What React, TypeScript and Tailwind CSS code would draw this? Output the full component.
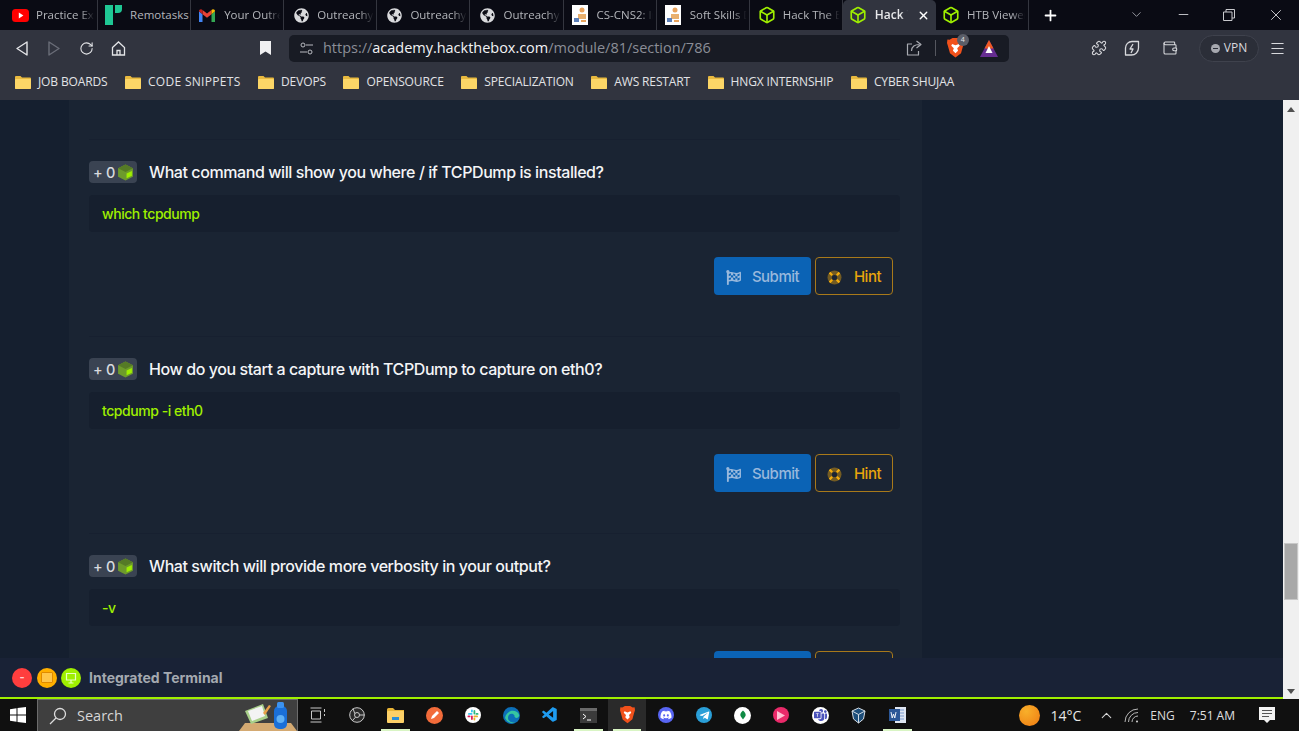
import React from "react";
import { Box, RotateCw, Puzzle, Wallet, ChevronDown, ChevronUp, Minus, X, Plus, Menu } from "lucide-react";
import { FaFlagCheckered, FaGlobeAmericas, FaDiscord, FaTelegramPlane } from "react-icons/fa";
import { VscVscode } from "react-icons/vsc";
import { BsMicrosoftTeams } from "react-icons/bs";

const Yt = () => (
  <svg width="17" height="13" viewBox="0 0 17 13"><rect width="17" height="13" rx="3.5" fill="#f00" /><path d="M6.8 3.6l4.6 2.9-4.6 2.9z" fill="#fff" /></svg>
);
const Remo = () => (
  <svg width="17" height="20" viewBox="0 0 17 20"><rect x="0" y="0" width="8" height="20" fill="#1fc794" /><path d="M10 0h7v4a4 4 0 0 1-4 4h-3z" fill="#1fc794" /></svg>
);
const Gmail = () => (
  <svg width="16" height="13" viewBox="0 0 16 13">
    <path d="M0 2.2V13h3.5V5.2z" fill="#4285f4" /><path d="M12.5 5.2V13H16V2.2z" fill="#34a853" />
    <path d="M3.5 1L8 4.6 12.5 1v4.2L8 8.8 3.5 5.2z" fill="#ea4335" /><path d="M0 2.2C0 .4 2.2-.4 3.5 1v4.2z" fill="#c5221f" /><path d="M16 2.2C16 .4 13.8-.4 12.5 1v4.2z" fill="#fbbc04" />
  </svg>
);
const Globe = () => <FaGlobeAmericas size={15} color="#d9dadd" />;
const Doodle = () => (
  <svg width="16" height="20" viewBox="0 0 16 20">
    <rect width="16" height="20" fill="#fff" /><circle cx="10" cy="5" r="2.5" fill="#e9a35c" /><path d="M6 9h8v5H6z" fill="#e9b06e" /><path d="M2 13h5v4H2z" fill="#5c7fb8" /><path d="M9 15h5v2H9z" fill="#e9a35c" />
  </svg>
);
const Htb = () => <Box size={18} color="#9fef00" strokeWidth={2.2} />;

const fade = "[mask-image:linear-gradient(to_right,black_72%,transparent_96%)]";

const tabs = [
  { icon: <Yt />, t: "Practice Ex", gap: "gap-[7px]", pl: "pl-[6px]", mask: fade },
  { icon: <Remo />, t: "Remotasks", gap: "gap-[8px]", pl: "pl-[6px]", mask: "" },
  { icon: <Gmail />, t: "Your Outreach", gap: "gap-[8px]", pl: "pl-[7px]", mask: fade },
  { icon: <Globe />, t: "Outreachy", gap: "gap-[7px]", pl: "pl-[8px]", mask: fade },
  { icon: <Globe />, t: "Outreachy", gap: "gap-[7px]", pl: "pl-[8px]", mask: fade },
  { icon: <Globe />, t: "Outreachy", gap: "gap-[7px]", pl: "pl-[8px]", mask: fade },
  { icon: <Doodle />, t: "CS-CNS2: Intro", gap: "gap-[8px]", pl: "pl-[7px]", mask: fade },
  { icon: <Doodle />, t: "Soft Skills Dev", gap: "gap-[8px]", pl: "pl-[7px]", mask: fade },
  { icon: <Htb />, t: "Hack The Box", gap: "gap-[7px]", pl: "pl-[8px]", mask: fade },
];

const Tab = ({ icon, t, gap, pl, mask }: { icon: React.ReactNode; t: string; gap: string; pl: string; mask: string }) => (
  <div className={`flex h-[30px] w-[93.1px] shrink-0 items-center border-r border-[#34363f] ${gap} ${pl}`}>
    <span className="flex w-[18px] shrink-0 justify-center">{icon}</span>
    <span className={`min-w-0 flex-1 overflow-hidden whitespace-nowrap text-[11.5px] text-[#b4b6bb] ${mask}`}>{t}</span>
  </div>
);

const Folder = () => (
  <svg width="16" height="14" viewBox="0 0 16 14">
    <path d="M0 2a1 1 0 0 1 1-1h4.5l1.5 1.5h8a1 1 0 0 1 1 1V13a1 1 0 0 1-1 1H1a1 1 0 0 1-1-1z" fill="#e8b93f" />
    <rect x="0" y="4" width="16" height="10" rx="1" fill="#fcd667" />
  </svg>
);

const marks = [
  { t: "JOB BOARDS", c: "tracking-[-0.13px]" },
  { t: "CODE SNIPPETS", c: "tracking-[0.3px]" },
  { t: "DEVOPS", c: "tracking-[-0.13px]" },
  { t: "OPENSOURCE", c: "tracking-[-0.13px]" },
  { t: "SPECIALIZATION", c: "tracking-[-0.13px]" },
  { t: "AWS RESTART", c: "tracking-[-0.13px]" },
  { t: "HNGX INTERNSHIP", c: "tracking-[-0.13px]" },
  { t: "CYBER SHUJAA", c: "tracking-[-0.13px]" },
];

const Brave = ({ size = 17 }: { size?: number }) => (
  <svg width={size} height={size * 1.15} viewBox="0 0 20 23">
    <path d="M3 2L6.5 0h7L17 2l2.500-.2.5 4-1 3-2.500 9L10 23l-6.500-5L1 9 0 5.800.5 1.800z" fill="#f1511b" />
    <path d="M6 7l4 1.500L14 7l1 2-3 3 1 3-3 3-3-3 1-3-3-3z" fill="#fff" />
  </svg>
);
const Bat = () => (
  <svg width="18" height="17" viewBox="0 0 18 17">
    <path d="M9 0l9 17H0z" fill="#662d91" /><path d="M9 0l4.5 8.5h-9z" fill="#f15a22" /><path d="M9 6l3.500 7h-7z" fill="#fff" />
  </svg>
);

const Cube = () => (
  <svg width="17" height="17" viewBox="0 0 16 16">
    <path d="M8 .5l7 3.500v8L8 15.500 1 12V4z" fill="#6d9a2c" />
    <path d="M8 .5l7 3.500-7 3.500L1 4z" fill="#557a26" />
    <path d="M9 9l5-2.500v4.500L9 13.500z" fill="#9fef00" />
  </svg>
);

const Ring = () => (
  <svg width="15" height="15" viewBox="0 0 15 15">
    <circle cx="7.5" cy="7.5" r="7" fill="#e0a010" fillOpacity="0.45" />
    <circle cx="7.5" cy="7.5" r="2.6" fill="#1a2433" />
    <path d="M1.800 3.400L3.400 1.800 6 4.400 4.400 6zM13.200 3.400L11.600 1.800 9 4.400 10.600 6zM1.800 11.600L3.400 13.200 6 10.600 4.400 9zM13.200 11.600L11.600 13.200 9 10.600 10.600 9z" fill="#f5ad0c" />
  </svg>
);

const Question = ({ q, a }: { q: string; a: string }) => (
  <section className="h-[197px] shrink-0 border-t border-[#172030] pt-[21px]">
    <div className="flex h-[22px] items-center">
      <div className="flex h-[22px] w-[48px] items-center justify-center gap-[2px] rounded-[4px] bg-[#3a4352] pl-px text-[14.5px] font-medium tracking-[-0.3px] text-[#d8dade]">
        <span className="pt-px">+ 0</span>
        <Cube />
      </div>
      <h3 className="ml-3 -mt-px whitespace-nowrap text-[16px] font-medium tracking-[-0.42px] text-[#f4f5f7]">{q}</h3>
    </div>
    <div className="mt-3 flex h-[37px] w-[811px] items-center rounded-[4px] bg-[#161f2e] px-[13px] text-[14px] font-medium tracking-[-0.45px] text-[#9fef00]">{a}</div>
    <div className="mt-[25px] flex justify-end gap-1 pr-[7px]">
      <button className="flex h-[38px] w-[97px] items-center justify-center gap-[11px] rounded-[4px] bg-[#0b63b5] pt-[2px] text-[15px] font-medium tracking-[-0.5px] text-[#98b8dc]">
        <FaFlagCheckered size={15} />
        Submit
      </button>
      <button className="flex h-[38px] w-[78px] items-center justify-center gap-[12px] rounded-[4px] border border-[#a8791a] pt-[2px] text-[15px] font-medium tracking-[-0.5px] text-[#e8a50c]">
        <Ring />
        Hint
      </button>
    </div>
  </section>
);

const IconSlot = ({ children, on }: { children: React.ReactNode; on?: boolean }) => (
  <div className={`relative flex h-[32px] w-[38.6px] shrink-0 items-center justify-center ${on ? "bg-[#2a2a2a]" : ""}`}>
    {children}
  </div>
);
const Ind = () => <span className="absolute bottom-0 left-[5px] right-[5px] h-[2px] bg-[#d9f5c4]" />;

export default function App() {
  return (
    <div className="flex h-[731px] w-[1299px] flex-col overflow-hidden bg-[#151f2f] [font-family:Inter,sans-serif]">
      {/* tab strip */}
      <div className="flex h-[30px] shrink-0 bg-[#0a0b14] pl-[5px] [font-family:'Open_Sans',sans-serif]">
        {tabs.map((t, i) => <Tab key={i} {...t} />)}
        <div className="flex h-[30px] w-[93.1px] shrink-0 items-center gap-[8px] rounded-t-[5px] bg-[#31343f] pl-[6px]">
          <span className="flex w-[18px] justify-center"><Htb /></span>
          <span className="w-[33px] overflow-hidden whitespace-nowrap text-[12px] font-semibold text-[#e8e9eb] [mask-image:linear-gradient(to_right,black_78%,transparent)]">Hack T</span>
          <X size={13} color="#fff" strokeWidth={2.5} className="ml-px" />
        </div>
        <Tab icon={<Htb />} t="HTB Viewer" gap="gap-[7px]" pl="pl-[6px]" mask={fade} />
        <Plus size={17} color="#fff" strokeWidth={2.5} className="ml-[13px] mt-[7px]" />
        <ChevronDown size={15} color="#9a9ca3" strokeWidth={1.5} className="ml-[70px] mt-[7px]" />
        <Minus size={15} color="#c8c9cd" strokeWidth={1.5} className="ml-[32px] mt-[7px]" />
        <svg width="12" height="12" viewBox="0 0 12 12" className="ml-[32px] mt-[9px]" fill="none" stroke="#c8c9cd"><path d="M.5 3h8.5v8.500H.5zM3 3V.5h8.500V9H9" /></svg>
        <X size={18} color="#c8c9cd" strokeWidth={1.3} className="ml-[32px] mt-[6px]" />
      </div>

      {/* toolbar */}
      <div className="flex h-[36px] shrink-0 items-center bg-[#31343f] [font-family:'Open_Sans',sans-serif]">
        <svg width="12" height="15" viewBox="0 0 12 15" className="ml-[16px]" fill="none" stroke="#e4e5e8" strokeWidth="1.4" strokeLinejoin="round"><path d="M11 1v13L1 7.5z" /></svg>
        <svg width="12" height="15" viewBox="0 0 12 15" className="ml-[20px]" fill="none" stroke="#6a6d78" strokeWidth="1.4" strokeLinejoin="round"><path d="M1 1v13l10-6.500z" /></svg>
        <RotateCw size={15} color="#e4e5e8" strokeWidth={1.7} className="ml-[19px]" />
        <svg width="15" height="15" viewBox="0 0 15 15" className="ml-[17px]" fill="none" stroke="#e4e5e8" strokeWidth="1.3"><path d="M1.500 6.500L7.500 1l6 5.500V14h-12zM6 14V9.500h3V14" /></svg>
        <svg width="11" height="14" viewBox="0 0 11 14" className="ml-[134px]"><path d="M0 0h11v14L5.500 10.500 0 14z" fill="#f0f0f2" /></svg>
        <div className="ml-[18px] flex h-[27px] w-[720px] items-center rounded-[5px] bg-[#181b24] pl-[11px]">
          <svg width="13" height="13" viewBox="0 0 13 13" fill="none" stroke="#b8bac0" strokeWidth="1"><circle cx="3" cy="3" r="2" /><path d="M6 3h7M0 10h7" /><circle cx="10" cy="10" r="2" /></svg>
          <span className="ml-[10px] whitespace-nowrap text-[14.5px] tracking-[-0.02px] text-[#8b8e97]">https://<span className="text-[#f2f3f5]">academy.hackthebox.com</span>/module/81/section/786</span>
          <svg width="17" height="16" viewBox="0 0 17 16" className="ml-[195px]" fill="none" stroke="#a9abb2" strokeWidth="1.2" strokeLinejoin="round"><path d="M6 4H1.500v11h11v-4" /><path d="M5.500 11c0-4.500 3.500-6.500 8-6.500M10.500 1l4.500 3.500L10.500 8" /></svg>
          <span className="ml-[12px] h-[16px] w-px bg-[#55575f]" />
          <div className="relative ml-[11px] flex">
            <Brave />
            <span className="absolute left-[10px] top-[-4px] flex h-[12px] w-[12px] items-center justify-center rounded-full bg-[#5b5e68] text-[7px] text-[#e6e6e8]">4</span>
          </div>
          <span className="ml-[16px] flex"><Bat /></span>
        </div>
        <Puzzle size={16} color="#d8d9dd" strokeWidth={1.6} className="ml-[82px]" />
        <svg width="16" height="17" viewBox="0 0 16 17" className="ml-[17px]" fill="none" stroke="#d8d9dd" strokeWidth="1.3" strokeLinejoin="round"><path d="M8 1.500h6.500V8a7 7 0 0 1-7 7H1.500V8a6.500 6.500 0 0 1 6.500-6.500z" /><path d="M9 4L6 9h3l-2 4" /></svg>
        <Wallet size={16} color="#d8d9dd" strokeWidth={1.6} className="ml-[22px]" />
        <div className="ml-[21px] flex h-[27px] w-[60px] items-center justify-center gap-[4px] rounded-full border border-[#3f424d] bg-[#2b2e38] text-[12px] text-[#d8d9dd]">
          <span className="flex h-[9px] w-[9px] items-center justify-center rounded-full bg-[#a6a8af]"><span className="h-px w-[5px] bg-[#2b2e38]" /></span>
          VPN
        </div>
        <Menu size={17} color="#d8d9dd" strokeWidth={1.5} className="ml-[10px]" />
      </div>

      {/* bookmarks */}
      <div className="flex h-[34px] shrink-0 items-center gap-[17.5px] bg-[#31343f] pb-[2px] pl-[15px] [font-family:'Open_Sans',sans-serif]">
        {marks.map((m) => (
          <div key={m.t} className={`flex items-center gap-[7px] whitespace-nowrap text-[12px] text-[#e2e3e6] ${m.c}`}>
            <Folder />
            {m.t}
          </div>
        ))}
      </div>

      {/* page */}
      <div className="flex h-[599px] shrink-0">
        <div className="relative min-w-0 flex-1 overflow-hidden">
          <div className="ml-[69px] flex h-[599px] w-[853px] flex-col overflow-hidden bg-[#1a2433] pl-5 pr-[22px] pt-[39px]">
            <Question q="What command will show you where / if TCPDump is installed?" a="which tcpdump" />
            <Question q="How do you start a capture with TCPDump to capture on eth0?" a="tcpdump -i eth0" />
            <Question q="What switch will provide more verbosity in your output?" a="-v" />
          </div>
          <div className="absolute bottom-0 left-0 right-0 flex h-[41px] items-center border-b-2 border-[#9fef00] bg-[#192236] pl-3">
            <span className="flex h-[20px] w-[20px] items-center justify-center rounded-full bg-[#ff3e3e] text-[11px] font-bold leading-none text-[#ffd0d0]">-</span>
            <span className="ml-[5px] flex h-[20px] w-[20px] items-center justify-center rounded-full bg-[#ffaf00]"><span className="h-[11px] w-[12px] rounded-[1px] border border-[#e08a00] bg-[#ffc64a]" /></span>
            <span className="ml-[4px] flex h-[20px] w-[20px] items-center justify-center rounded-full bg-[#9fef00]">
              <svg width="12" height="12" viewBox="0 0 12 12" fill="none" stroke="#e6ffc0" strokeWidth="1.2"><path d="M1.500 1.500h9v6.500h-9zM6 8v3M3.500 11h5" /></svg>
            </span>
            <span className="ml-[8px] text-[14px] font-bold text-[#a4a9b0]">Integrated Terminal</span>
          </div>
        </div>
        {/* scrollbar */}
        <div className="flex w-4 shrink-0 flex-col items-center bg-[#f0f0f0] pt-[7px] pb-[5px]">
          <span className="h-0 w-0 border-x-[4px] border-b-[5px] border-x-transparent border-b-[#505050]" />
          <span className="mt-[431px] h-[57px] w-[14px] shrink-0 border border-[#c8c8c8] bg-[#a8a8a8]" />
          <span className="mt-auto h-0 w-0 border-x-[4px] border-t-[5px] border-x-transparent border-t-[#505050]" />
        </div>
      </div>

      {/* taskbar */}
      <div className="flex h-[32px] shrink-0 items-center bg-[#101010] [font-family:'Open_Sans',sans-serif]">
        <svg width="16" height="16" viewBox="0 0 16 16" className="ml-[10px]" fill="#fff"><path d="M0 2.300L6.500 1.300V7.500H0zM7.500 1.100L16 0V7.500H7.500zM0 8.500H6.500V14.700L0 13.700zM7.500 8.500H16V16L7.500 14.900z" /></svg>
        <div className="relative ml-[11px] flex h-[32px] w-[261px] items-center overflow-hidden border-x border-t border-[#6c6c6c] bg-[#3f3f3f] pl-[11px]">
          <svg width="18" height="18" viewBox="0 0 18 18" fill="none" stroke="#dcdcdc" strokeWidth="1.3"><circle cx="11" cy="7" r="5.500" /><path d="M7 11l-6 6" /></svg>
          <span className="ml-[10px] pt-px text-[14.5px] text-[#d6d6d6]">Search</span>
          <svg width="62" height="30" viewBox="0 0 62 30" className="absolute bottom-0 right-0">
            <path d="M4 30l6-8h46l6 8z" fill="#d4aa72" />
            <path d="M10 10l18-7 5 14-17 6z" fill="#a9d08a" /><path d="M13 10l14-5 3 10-13 5z" fill="#f3f3f3" />
            <path d="M28 12l6-8 2 1-6 9z" fill="#e8a048" />
            <rect x="39" y="5" width="13" height="23" rx="5" fill="#1a6fd8" /><rect x="42" y="1" width="7" height="6" rx="1.5" fill="#3b92f0" /><circle cx="45.5" cy="18" r="4" fill="#5fb0f5" />
          </svg>
        </div>
        <div className="ml-[1px] flex items-center">
          <IconSlot>
            <svg width="16" height="16" viewBox="0 0 16 16" fill="none" stroke="#c9c9c9" strokeWidth="1"><path d="M.5 1h11M.5 15h11M1.500 4h9v8h-9zM14.500 2v3M14.500 7v2" /></svg>
          </IconSlot>
          <IconSlot>
            <svg width="16" height="16" viewBox="0 0 16 16" fill="none" stroke="#c9c9c9" strokeWidth="1"><circle cx="8" cy="8" r="7.3" fill="#2a2a2a" /><circle cx="8" cy="8" r="2.5" /><path d="M5.800 6.700L4 1.500M10.500 8h5M6.500 10.200L3 14" /></svg>
          </IconSlot>
          <IconSlot>
            <svg width="17" height="15" viewBox="0 0 17 15"><path d="M0 1.500A1.500 1.500 0 0 1 1.500 0H6l2 2h9v3H0z" fill="#e8b436" /><rect y="3" width="17" height="12" rx="1" fill="#fcd067" /><rect x="5" y="9" width="7" height="3" fill="#2a8fd8" /></svg>
            <Ind />
          </IconSlot>
          <IconSlot>
            <svg width="17" height="17" viewBox="0 0 17 17"><circle cx="8.5" cy="8.5" r="8.5" fill="#f26b3a" /><path d="M5 12l1-3 5-5 2 2-5 5z" fill="#fff" /></svg>
          </IconSlot>
          <IconSlot>
            <svg width="16" height="16" viewBox="0 0 16 16"><circle cx="8" cy="8" r="8" fill="#fff" /><rect x="3" y="6" width="4.5" height="1.8" rx=".9" fill="#36c5f0" /><rect x="6" y="2.5" width="1.8" height="3" rx=".9" fill="#36c5f0" /><rect x="8.5" y="3" width="1.8" height="4.5" rx=".9" fill="#2eb67d" /><rect x="10.5" y="6" width="3" height="1.8" rx=".9" fill="#2eb67d" /><rect x="8.5" y="8.5" width="4.5" height="1.8" rx=".9" fill="#ecb22e" /><rect x="8.5" y="10.5" width="1.8" height="3" rx=".9" fill="#ecb22e" /><rect x="6" y="8.5" width="1.8" height="4.5" rx=".9" fill="#e01e5a" /><rect x="2.5" y="8.5" width="3" height="1.8" rx=".9" fill="#e01e5a" /></svg>
          </IconSlot>
          <IconSlot>
            <svg width="17" height="17" viewBox="0 0 17 17"><circle cx="8.5" cy="8.5" r="8.5" fill="#0c6fb8" /><path d="M2 11C3 5 9 2 14 5c2 1.500 3 4 1 5.500-2 1-4 0-3.500-2C10 6 5 6 5 11c0 3 4 5.500 8 4.500A8.500 8.500 0 0 1 2 11z" fill="#37c6a0" /></svg>
          </IconSlot>
          <IconSlot><VscVscode size={18} color="#1f9cf0" /></IconSlot>
          <IconSlot>
            <svg width="17" height="15" viewBox="0 0 17 15"><rect width="17" height="15" fill="#3b3b3b" /><rect width="17" height="3" fill="#6a6a6a" /><path d="M3 6l3 2.500-3 2.500" fill="none" stroke="#fff" /><path d="M7 12h4" stroke="#fff" /></svg>
            <Ind />
          </IconSlot>
          <IconSlot on><Brave size={15} /><Ind /></IconSlot>
          <IconSlot>
            <span className="flex h-[16px] w-[16px] items-center justify-center rounded-full bg-[#5865f2]"><FaDiscord size={12} color="#fff" /></span>
          </IconSlot>
          <IconSlot>
            <span className="flex h-[16px] w-[16px] items-center justify-center rounded-full bg-[#2a9fd8]"><FaTelegramPlane size={11} color="#fff" /></span>
          </IconSlot>
          <IconSlot>
            <span className="flex h-[17px] w-[17px] items-center justify-center rounded-full bg-white">
              <svg width="6" height="12" viewBox="0 0 8 12"><path d="M4 0c2.500 2.500 4 4.500 3.500 6.500S5 9.500 4 12C3 9.500 1 8.500.5 6.500S1.500 2.500 4 0z" fill="#0f8a44" /></svg>
            </span>
          </IconSlot>
          <IconSlot>
            <span className="flex h-[16px] w-[16px] items-center justify-center rounded-full bg-[#ea2a6a]">
              <svg width="8" height="9" viewBox="0 0 8 9"><path d="M0 0l8 4.500L0 9z" fill="#ffc0d4" /></svg>
            </span>
          </IconSlot>
          <IconSlot>
            <span className="flex h-[17px] w-[17px] items-center justify-center rounded-full bg-white"><BsMicrosoftTeams size={13} color="#4b53bc" /></span>
          </IconSlot>
          <IconSlot>
            <svg width="15" height="17" viewBox="0 0 15 17" fill="#1d4e7a" stroke="#d4dce4" strokeWidth="1"><path d="M7.500 1l6.500 3-1.500 8-5 4-5-4L1 4z" /><path d="M1 4l6.500 3.500L14 4M7.500 7.500V16" fill="none" /></svg>
          </IconSlot>
          <IconSlot>
            <svg width="17" height="16" viewBox="0 0 17 16"><rect x="6" width="11" height="16" fill="#dfe6f2" /><path d="M9 3h6M9 6h6M9 9h6M9 12h6" stroke="#7a9bd0" /><rect y="2" width="11" height="12" fill="#2b5797" /><path d="M2 5l1.200 6 1.300-4 1.300 4L7 5" fill="none" stroke="#fff" strokeWidth=".9" /></svg>
            <Ind />
          </IconSlot>
        </div>
        <span className="ml-[102px] h-[21px] w-[21px] shrink-0 rounded-full bg-[radial-gradient(circle_at_35%_30%,#f8b02a,#ef7a12)]" />
        <span className="ml-[11px] pt-px text-[14px] text-[#e8e8e8]">14°C</span>
        <ChevronUp size={17} color="#d4d4d4" strokeWidth={1.5} className="ml-[17px]" />
        <svg width="15" height="15" viewBox="0 0 15 15" className="ml-[9px]" fill="none" stroke="#b8b8b8" strokeWidth="1"><path d="M1 14A13 13 0 0 1 14 1M4.500 14A9.500 9.500 0 0 1 14 4.500M8 14a6 6 0 0 1 6-6" /><circle cx="13" cy="13.5" r="1" fill="#d8d8d8" stroke="none" /></svg>
        <span className="ml-[11px] pt-px text-[12px] text-[#dcdcdc]">ENG</span>
        <span className="ml-[15px] pt-px text-[12px] text-[#e0e0e0]">7:51 AM</span>
        <svg width="16" height="17" viewBox="0 0 16 17" className="ml-[24px]"><path d="M0 0h16v13h-5l-3 3-3-3H0z" fill="#f2f2f2" /><path d="M3 3.500h10M3 6.500h10M3 9.500h7" stroke="#555" /></svg>
      </div>
    </div>
  );
}
